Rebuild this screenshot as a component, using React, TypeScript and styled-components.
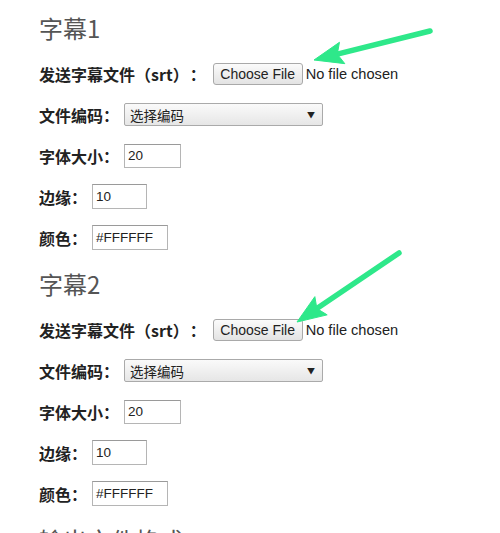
import React from "react";
import styled, { createGlobalStyle } from "styled-components";

const Global = createGlobalStyle`
  html, body { margin: 0; padding: 0; background: #fff; }
  body { font-family: "Noto Sans CJK SC", "Noto Sans", sans-serif; color: #222; }
`;

const Page = styled.div`
  position: relative;
  width: 500px;
  height: 533px;
  overflow: hidden;
  padding: 2px 0 0 39px;
  box-sizing: border-box;
`;

const Section = styled.section`
  display: flex;
  flex-direction: column;
`;

const Heading = styled.h2<{ $top: number }>`
  margin: ${(p) => p.$top}px 0 7px 0;
  font-family: "Noto Sans CJK SC", sans-serif;
  font-size: 24px;
  font-weight: 400;
  line-height: 36px;
  color: #555;
`;

const Row = styled.div`
  display: flex;
  align-items: center;
  height: 41px;
  gap: 5px;
`;

const Label = styled.span`
  font-family: "Noto Sans CJK SC", sans-serif;
  font-weight: 700;
  font-size: 16px;
  color: #222;
  white-space: nowrap;
`;

const Colon = styled.span`
  margin-left: 9px;
`;

const FileLabel = styled(Label)`
  margin-right: 2px;
`;

const FileButton = styled.span`
  display: inline-flex;
  align-items: center;
  justify-content: center;
  box-sizing: border-box;
  width: 90px;
  height: 22px;
  border: 1px solid #a9a9a9;
  border-radius: 3px;
  background: linear-gradient(#fbfbfb, #e3e3e3);
  font-family: "Liberation Sans", Arial, sans-serif;
  font-size: 14px;
  color: #222;
`;

const NoFile = styled.span`
  margin-left: -2px;
  font-family: "Liberation Sans", Arial, sans-serif;
  font-size: 14.6px;
  color: #222;
`;

const Select = styled.div`
  display: flex;
  align-items: center;
  justify-content: space-between;
  box-sizing: border-box;
  width: 199px;
  height: 23px;
  padding: 0 7px 0 5px;
  border: 1px solid #aaa;
  border-radius: 2px;
  background: linear-gradient(#fafafa, #e6e6e6);
  font-family: "Noto Sans CJK SC", sans-serif;
  font-size: 13.5px;
  color: #222;
`;

const Caret = styled.span`
  font-size: 8px;
  color: #222;
`;

const Field = styled.div<{ $w: number; $h: number }>`
  display: flex;
  align-items: center;
  box-sizing: border-box;
  width: ${(p) => p.$w}px;
  height: ${(p) => p.$h}px;
  padding-left: 3px;
  border: 1px solid #b5b5b5;
  border-top-color: #9a9a9a;
  background: #fff;
  font-family: "Liberation Sans", Arial, sans-serif;
  font-size: 13.5px;
  color: #222;
`;

const Overlay = styled.svg`
  position: absolute;
  left: 0;
  top: 0;
  pointer-events: none;
`;

type Arrow = { tail: [number, number]; tip: [number, number] };

const arrowShapes = (a: Arrow) => {
  const [tx, ty] = a.tail;
  const [px, py] = a.tip;
  const dx = px - tx;
  const dy = py - ty;
  const len = Math.hypot(dx, dy);
  const ux = dx / len;
  const uy = dy / len;
  const headLen = 29;
  const half = 11;
  const bx = px - ux * headLen;
  const by = py - uy * headLen;
  const nx = -uy;
  const ny = ux;
  const notchX = px - ux * (headLen - 5);
  const notchY = py - uy * (headLen - 5);
  const pts = [
    [px, py],
    [bx + nx * half, by + ny * half],
    [notchX, notchY],
    [bx - nx * half, by - ny * half],
  ]
    .map((p) => p.join(","))
    .join(" ");
  return { line: { x1: tx, y1: ty, x2: notchX, y2: notchY }, pts };
};

const Arrows: React.FC = () => {
  const arrows: Arrow[] = [
    { tail: [430, 31], tip: [314, 60] },
    { tail: [399, 253], tip: [297, 322] },
  ];
  return (
    <Overlay width={500} height={533} viewBox="0 0 500 533">
      {arrows.map((a, i) => {
        const s = arrowShapes(a);
        return (
          <g key={i} fill="#2ee88a" stroke="#2ee88a">
            <line {...s.line} strokeWidth={5.5} strokeLinecap="round" />
            <polygon points={s.pts} strokeWidth={1} strokeLinejoin="round" />
          </g>
        );
      })}
    </Overlay>
  );
};

const SubtitleSection: React.FC<{ n: number; top: number }> = ({ n, top }) => (
  <Section>
    <Heading $top={top}>字幕{n}</Heading>
    <Row>
      <FileLabel>
        发送字幕文件（srt）<Colon>：</Colon>
      </FileLabel>
      <FileButton>Choose File</FileButton>
      <NoFile>No file chosen</NoFile>
    </Row>
    <Row>
      <Label>文件编码：</Label>
      <Select>
        <span>选择编码</span>
        <Caret>▼</Caret>
      </Select>
    </Row>
    <Row>
      <Label>字体大小：</Label>
      <Field $w={57} $h={24}>20</Field>
    </Row>
    <Row>
      <Label>边缘：</Label>
      <Field $w={55} $h={25}>10</Field>
    </Row>
    <Row>
      <Label>颜色：</Label>
      <Field $w={76} $h={25}>#FFFFFF</Field>
    </Row>
  </Section>
);

export default function App() {
  return (
    <>
      <Global />
      <Page>
        <SubtitleSection n={1} top={8} />
        <SubtitleSection n={2} top={8} />
        <Section>
          <Heading $top={8}>输出文件格式</Heading>
        </Section>
        <Arrows />
      </Page>
    </>
  );
}
